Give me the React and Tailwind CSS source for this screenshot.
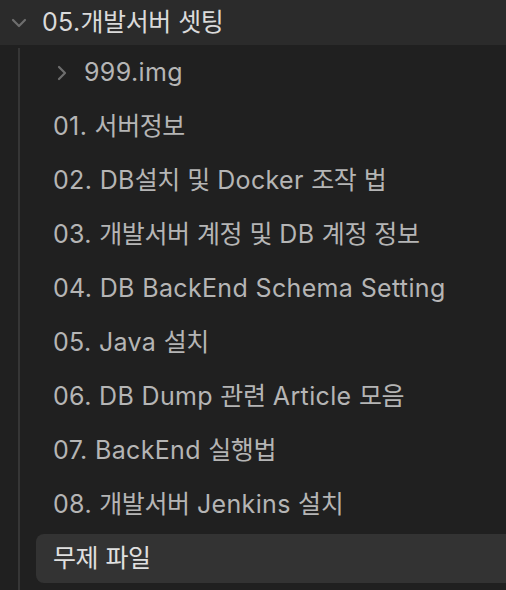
import React from 'react';

const items = [
  '01. 서버정보',
  '02. DB설치 및 Docker 조작 법',
  '03. 개발서버 계정 및 DB 계정 정보',
  '04. DB BackEnd Schema Setting',
  '05. Java 설치',
  '06. DB Dump 관련 Article 모음',
  '07. BackEnd 실행법',
  '08. 개발서버 Jenkins 설치',
];

// latin runs get a little tracking, hangul a little less, to match the original widths
function Label({ text }) {
  const parts = text.split(/([가-힣]+)/).filter(Boolean);
  return (
    <span className="whitespace-nowrap">
      {parts.map((p, i) =>
        /[가-힣]/.test(p) ? (
          <span key={i} className="tracking-[-0.45px]">{p}</span>
        ) : (
          <span key={i} className="tracking-[0.35px]">{p}</span>
        )
      )}
    </span>
  );
}

function ChevronDown() {
  return (
    <svg width="20" height="20" viewBox="0 0 20 20" fill="none" stroke="#6e6e6e" strokeWidth="2.2" strokeLinecap="round" strokeLinejoin="round">
      <path d="M4 7l6 6 6-6" />
    </svg>
  );
}

function ChevronRight() {
  return (
    <svg width="20" height="20" viewBox="0 0 20 20" fill="none" stroke="#6e6e6e" strokeWidth="2.2" strokeLinecap="round" strokeLinejoin="round">
      <path d="M7 4l6 6-6 6" />
    </svg>
  );
}

export default function App() {
  return (
    <div className="w-[506px] h-[590px] overflow-hidden bg-[#202020] font-['Inter','Noto_Sans_CJK_KR',sans-serif]">
      <div className="h-[45px] bg-[#2b2b2b] flex items-center pl-[9px] gap-[13px]">
        <ChevronDown />
        <span className="text-[25px] text-[#dadada] leading-none"><Label text="05.개발서버 셋팅" /></span>
      </div>
      <div className="ml-[18px] mt-[3px] border-l-2 border-[#363636] pl-[16px] flex flex-col gap-[5px] pb-[7px]">
        <div className="h-[49px] flex items-center pl-[17px]">
          <span className="-ml-[1px] mr-[12px]"><ChevronRight /></span>
          <span className="text-[25px] text-[#b5b5b5] leading-none"><Label text="999.img" /></span>
        </div>
        {items.map((t) => (
          <div key={t} className="h-[49px] flex items-center px-[17px]">
            <span className="text-[25px] text-[#b5b5b5] leading-none"><Label text={t} /></span>
          </div>
        ))}
        <div className="h-[49px] flex items-center px-[17px] bg-[#333333] rounded-l-[8px] -mr-[10px]">
          <span className="text-[25px] text-[#e0e0e0] leading-none"><Label text="무제 파일" /></span>
        </div>
      </div>
    </div>
  );
}
